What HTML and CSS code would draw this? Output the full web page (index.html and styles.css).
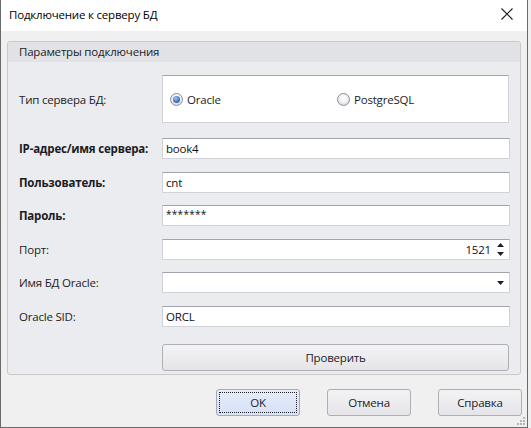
FILE: index.html
```html
<!DOCTYPE html>
<html lang="ru">
<head>
<meta charset="utf-8">
<title>Подключение к серверу БД</title>
<link rel="stylesheet" href="styles.css">
</head>
<body>
<div class="window">
  <div class="titlebar">
    <span class="title">Подключение к серверу БД</span>
    <svg class="close" width="12" height="12" viewBox="0 0 12 12"><path d="M0.5 0.5 L11.5 11.5 M11.5 0.5 L0.5 11.5" stroke="#1a1a1a" stroke-width="1.1" fill="none"/></svg>
  </div>
  <div class="content">
    <div class="group">
      <div class="group-header">Параметры подключения</div>
      <div class="group-body">
        <div class="row row-type">
          <div class="label">Тип сервера БД:</div>
          <div class="radio-box">
            <label class="radio-item"><span class="radio checked"></span>Oracle</label>
            <label class="radio-item"><span class="radio"></span>PostgreSQL</label>
          </div>
        </div>
        <div class="fields">
          <div class="row">
            <div class="label bold">IP-адрес/имя сервера:</div>
            <div class="field">book4</div>
          </div>
          <div class="row">
            <div class="label bold">Пользователь:</div>
            <div class="field">cnt</div>
          </div>
          <div class="row">
            <div class="label bold">Пароль:</div>
            <div class="field pass">*******</div>
          </div>
          <div class="row">
            <div class="label">Порт:</div>
            <div class="field spin"><span class="num">1521</span>
              <span class="spin-btns">
                <svg width="7" height="4" viewBox="0 0 7 4"><path d="M3.5 0 L7 4 L0 4 Z" fill="#1e1e2a"/></svg>
                <svg width="7" height="4" viewBox="0 0 7 4"><path d="M0 0 L7 0 L3.5 4 Z" fill="#1e1e2a"/></svg>
              </span>
            </div>
          </div>
          <div class="row">
            <div class="label">Имя БД Oracle:</div>
            <div class="field combo"><span></span>
              <svg class="arrow" width="7" height="4" viewBox="0 0 7 4"><path d="M0 0 L7 0 L3.5 4 Z" fill="#1e1e2a"/></svg>
            </div>
          </div>
          <div class="row">
            <div class="label">Oracle SID:</div>
            <div class="field">ORCL</div>
          </div>
        </div>
        <div class="row row-btn">
          <div class="label"></div>
          <button class="btn check">Проверить</button>
        </div>
      </div>
    </div>
    <div class="footer">
      <button class="btn dlg default"><span class="focus">OK</span></button>
      <button class="btn dlg">Отмена</button>
      <button class="btn dlg">Справка</button>
    </div>
    <div class="grip">
      <svg width="8" height="8" viewBox="0 0 8 8">
        <rect x="6" y="0" width="2" height="2" fill="#b4b4b4"/>
        <rect x="3" y="3" width="2" height="2" fill="#b4b4b4"/>
        <rect x="6" y="3" width="2" height="2" fill="#b4b4b4"/>
        <rect x="0" y="6" width="2" height="2" fill="#b4b4b4"/>
        <rect x="3" y="6" width="2" height="2" fill="#b4b4b4"/>
        <rect x="6" y="6" width="2" height="2" fill="#b4b4b4"/>
      </svg>
    </div>
  </div>
</div>
</body>
</html>
```

FILE: styles.css
```css
html, body {
  margin: 0;
  padding: 0;
  background: #f0f0f0;
}
body {
  font-family: "Open Sans", "Noto Sans", sans-serif;
  font-size: 11.5px;
  letter-spacing: -0.2px;
  color: #1c1c24;
}
.window {
  width: 526px;
  height: 427px;
  border-left: 1px solid #6a6a6a;
  border-right: 1px solid #6a6a6a;
  border-bottom: 1px solid #6a6a6a;
  background: #f0f0f0;
  display: flex;
  flex-direction: column;
}
.titlebar {
  height: 31px;
  background: #ffffff;
  display: flex;
  align-items: center;
  justify-content: space-between;
  padding: 0 14px 0 8px;
  flex: none;
}
.title {
  color: #000;
  margin-top: -3px;
}
.close {
  margin-top: -4px;
}
.content {
  padding: 10px 5px 0 6px;
  position: relative;
  flex: 1;
}
.group {
  width: 512px;
  height: 332px;
  border: 1px solid #c8c8cc;
  border-radius: 3px;
  background: #ebecef;
  display: flex;
  flex-direction: column;
}
.group-header {
  height: 20px;
  line-height: 20px;
  background: #e1e2e6;
  padding-left: 11px;
  color: #1c1c28;
  border-radius: 2px 2px 0 0;
}
.group-body {
  padding: 13px 11px 0 11px;
  display: flex;
  flex-direction: column;
}
.row {
  display: flex;
  align-items: center;
}
.label {
  width: 143px;
  flex: none;
  white-space: nowrap;
}
.bold {
  font-weight: bold;
}
.radio-box {
  width: 345px;
  height: 46px;
  background: #fff;
  border: 1px solid #d2d3d8;
  border-top-color: #a3a4ad;
  display: flex;
  align-items: center;
  padding-left: 7px;
  box-sizing: content-box;
}
.radio-item {
  display: flex;
  align-items: center;
  width: 167px;
}
.radio {
  width: 11px;
  height: 11px;
  border-radius: 50%;
  border: 1px solid #8e8f99;
  background: radial-gradient(circle at 50% 40%, #ffffff 0%, #f1f1f1 45%, #c9cad0 100%);
  margin-right: 4px;
  position: relative;
}
.radio.checked::after {
  content: "";
  position: absolute;
  left: 2px;
  top: 2px;
  width: 7px;
  height: 7px;
  border-radius: 50%;
  background: radial-gradient(circle at 40% 35%, #a6c7f2 0%, #3f76c9 55%, #1f4e9a 100%);
}
.fields {
  margin-top: 15px;
  display: grid;
  grid-auto-rows: 21px;
  row-gap: 12.6px;
}
.field {
  width: 341px;
  height: 19px;
  background: #fff;
  border: 1px solid #d2d3d8;
  border-top-color: #a3a4ad;
  padding: 0 2px 0 3px;
  display: flex;
  align-items: center;
  color: #101018;
  line-height: 19px;
}
.field.pass {
  font-size: 10px;
  letter-spacing: 0.3px;
  padding-bottom: 2px;
  height: 17px;
}
.field.spin {
  justify-content: flex-end;
}
.num {
  margin-right: 6px;
}
.spin-btns {
  display: flex;
  flex-direction: column;
  gap: 5px;
  margin-right: 3px;
}
.spin-btns svg {
  display: block;
}
.field.combo {
  justify-content: space-between;
}
.field.combo .arrow {
  margin-right: 3px;
}
.row-btn {
  margin-top: 17px;
}
.btn {
  font-family: "Open Sans", "Noto Sans", sans-serif;
  font-size: 11.5px;
  letter-spacing: -0.2px;
  color: #1c1c28;
  border: 1px solid #aeaeb4;
  border-radius: 3px;
  background: linear-gradient(#f3f3f5, #e5e5e9);
  padding: 0;
  margin: 0;
}
.btn.check {
  width: 347px;
  height: 27px;
}
.footer {
  display: flex;
  justify-content: flex-end;
  gap: 27px;
  margin-top: 14px;
  padding-right: 0;
}
.btn.dlg {
  width: 84px;
  height: 27px;
}
.btn.default {
  background: linear-gradient(#e6ecfb, #d6e0f7);
  border-color: #a4a8b8;
  padding: 2px;
}
.focus {
  display: flex;
  align-items: center;
  justify-content: center;
  height: 100%;
  border: 1px dotted #202020;
  box-sizing: border-box;
}
.grip {
  position: absolute;
  right: 2px;
  bottom: 2px;
  line-height: 0;
}
```
